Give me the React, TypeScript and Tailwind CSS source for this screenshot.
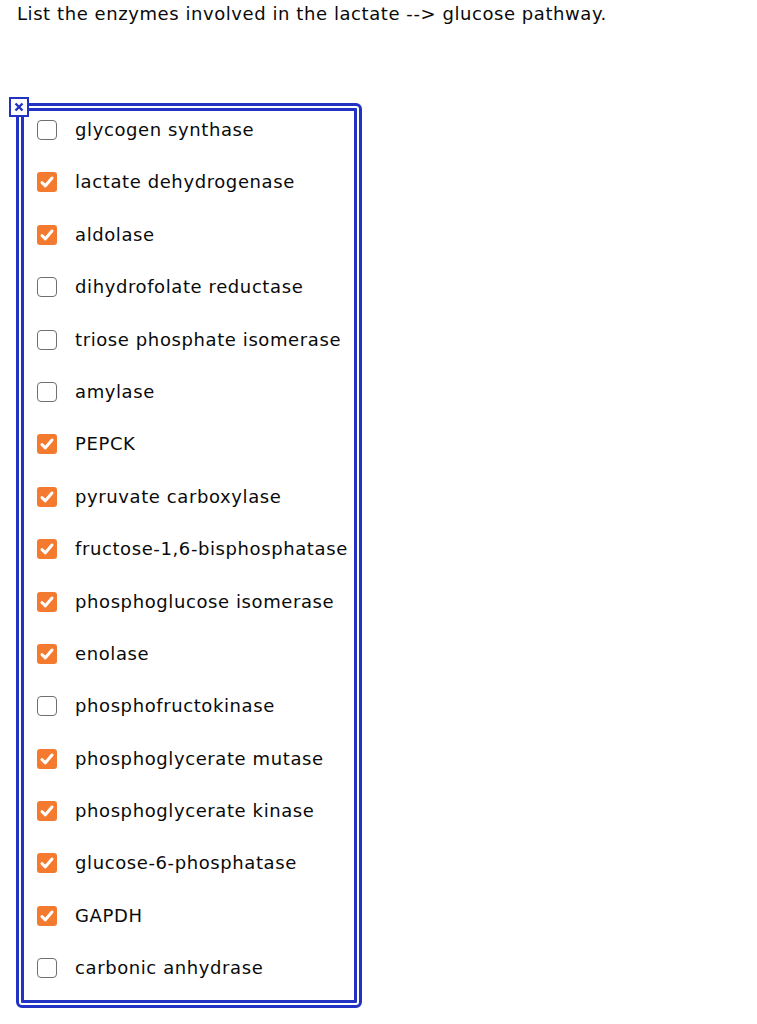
import React from "react";

const items: [string, boolean][] = [
  ["glycogen synthase", false],
  ["lactate dehydrogenase", true],
  ["aldolase", true],
  ["dihydrofolate reductase", false],
  ["triose phosphate isomerase", false],
  ["amylase", false],
  ["PEPCK", true],
  ["pyruvate carboxylase", true],
  ["fructose-1,6-bisphosphatase", true],
  ["phosphoglucose isomerase", true],
  ["enolase", true],
  ["phosphofructokinase", false],
  ["phosphoglycerate mutase", true],
  ["phosphoglycerate kinase", true],
  ["glucose-6-phosphatase", true],
  ["GAPDH", true],
  ["carbonic anhydrase", false],
];

function Box({ checked }: { checked: boolean }) {
  if (checked) {
    return (
      <div className="w-[20px] h-[20px] rounded-[3px] bg-[#f47a2f] flex items-center justify-center shrink-0">
        <svg width="16" height="16" viewBox="0 0 16 16">
          <path d="M3 8.6 L6.4 11.8 L13 4" fill="none" stroke="#fff" strokeWidth="3" strokeLinecap="round" strokeLinejoin="round" />
        </svg>
      </div>
    );
  }
  return <div className="w-[20px] h-[20px] rounded-[4px] border-[1.5px] border-[#6f6f6f] bg-white shrink-0" />;
}

export default function App() {
  return (
    <div className="bg-white min-h-[1024px] w-[757px] text-[#0a0a0a] font-['DejaVu_Sans',Verdana,sans-serif]">
      <div className="pt-[3px] pl-[17px] text-[18px] leading-[22px] tracking-[0.57px] whitespace-nowrap">
        List the enzymes involved in the lactate --&gt; glucose pathway.
      </div>
      <div className="relative ml-[16px] mt-[78px] w-[346px] h-[905px] border-[8px] border-double border-[#2233c4] rounded-[6px]">
        <div className="absolute left-[-15px] top-[-14px] w-[20px] h-[20px] border-2 border-[#2233c4] bg-white flex items-center justify-center">
          <svg width="10" height="10" viewBox="0 0 10 10">
            <path d="M1.5 1.5 L8.5 8.5 M8.5 1.5 L1.5 8.5" stroke="#2233c4" strokeWidth="2.4" />
          </svg>
        </div>
        <div className="flex flex-col gap-[28.4px] pt-[7px] pl-[13px]">
          {items.map(([label, checked]) => (
            <div key={label} className="flex items-center h-[24px] gap-[18px]">
              <Box checked={checked} />
              <span className="text-[18px] leading-[24px] tracking-[0.6px] whitespace-nowrap">{label}</span>
            </div>
          ))}
        </div>
      </div>
    </div>
  );
}
